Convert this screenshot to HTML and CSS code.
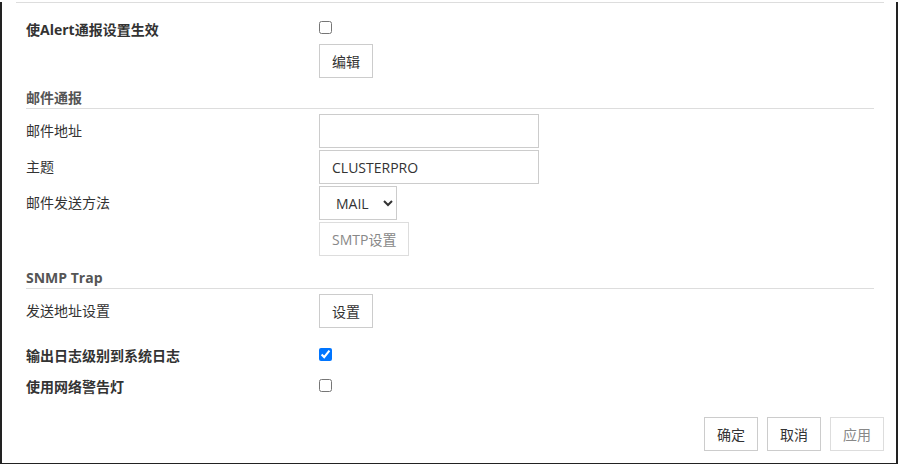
FILE: index.html
```html
<!doctype html>
<html lang="zh">
<head>
  <meta charset="UTF-8">
  <title>Alert通报设置</title>
  <link rel="stylesheet" href="styles.css">
</head>
<body>

  <div class="dialog">
    <div class="panel">
      <div class="form">

        <div class="row row-top">
          <label class="label strong">使Alert通报设置生效</label>
          <div class="ctrl stack">
            <input type="checkbox" class="check">
            <button class="btn btn-edit">编辑</button>
          </div>
        </div>

        <h3 class="heading">邮件通报</h3>
        <div class="fields">
          <div class="row">
            <label class="label">邮件地址</label>
            <div class="ctrl"><input type="text" class="text"></div>
          </div>
          <div class="row">
            <label class="label">主题</label>
            <div class="ctrl"><input type="text" class="text" value="CLUSTERPRO"></div>
          </div>
          <div class="row">
            <label class="label">邮件发送方法</label>
            <div class="ctrl">
              <select class="select">
                <option>MAIL</option>
                <option>SMTP</option>
              </select>
            </div>
          </div>
          <div class="row">
            <span class="label"></span>
            <div class="ctrl"><button class="btn" disabled>SMTP设置</button></div>
          </div>
        </div>

        <h3 class="heading heading-snmp">SNMP Trap</h3>
        <div class="fields">
          <div class="row">
            <label class="label">发送地址设置</label>
            <div class="ctrl"><button class="btn">设置</button></div>
          </div>
        </div>

        <div class="row row-log">
          <label class="label strong">输出日志级别到系统日志</label>
          <div class="ctrl stack"><input type="checkbox" class="check" checked></div>
        </div>
        <div class="row row-light">
          <label class="label strong">使用网络警告灯</label>
          <div class="ctrl stack"><input type="checkbox" class="check"></div>
        </div>

      </div>

      <div class="footer">
        <button class="btn">确定</button>
        <button class="btn">取消</button>
        <button class="btn" disabled>应用</button>
      </div>
    </div>
  </div>

</body>
</html>
```

FILE: styles.css
```css
body {
  margin: 0;
  background-color: #fff;
  font-family: "Open Sans", "Noto Sans CJK SC", sans-serif;
  font-size: 14px;
  color: #333;
}

.dialog {
  box-sizing: border-box;
  width: 898px;
  height: 463px;
  padding: 0 12px 0 14px;
  border-left: 2px solid #222;
  border-right: 2px solid #222;
  border-bottom: 2px solid #222;
}

.panel {
  margin-top: 2px;
  border-top: 1px solid #ddd;
}

.form {
  padding: 0 10px;
}

/* Rows: label column + control column */
.row {
  display: grid;
  grid-template-columns: 293px 1fr;
  align-items: center;
}

.row-top,
.row-log,
.row-light {
  align-items: start;
}

.row-top {
  margin-top: 17px;
}

.row-log {
  margin-top: 18px;
}

.row-light {
  margin-top: 11px;
}

.label {
  line-height: 20px;
}

.label.strong {
  font-weight: bold;
}

.stack {
  display: flex;
  flex-direction: column;
  align-items: flex-start;
}

.check {
  width: 13px;
  height: 13px;
  margin: 1px 0 0 0;
}

.row-log .check,
.row-light .check {
  margin-top: 2px;
}

.btn-edit {
  margin-top: 10px;
}

/* Section headings */
.heading {
  margin: 10px 0 0;
  font-size: 14px;
  line-height: 20px;
  font-weight: bold;
  color: #555;
  border-bottom: 1px solid #ddd;
}

.heading-snmp {
  margin-top: 12px;
}

.fields {
  display: flex;
  flex-direction: column;
  gap: 2px;
  margin-top: 5px;
}

/* Controls */
.text {
  box-sizing: border-box;
  width: 220px;
  height: 34px;
  padding: 0 12px;
  border: 1px solid #ccc;
  border-radius: 0;
  font: inherit;
  color: #333;
  outline: none;
}

.select {
  box-sizing: border-box;
  width: 78px;
  height: 34px;
  padding: 0 4px 0 12px;
  border: 1px solid #ccc;
  border-radius: 0;
  background-color: #fff;
  font: inherit;
  color: #333;
}

.btn {
  box-sizing: border-box;
  height: 34px;
  padding: 0 12px;
  border: 1px solid #ccc;
  border-radius: 0;
  background-color: #fff;
  font: inherit;
  color: #333;
  cursor: pointer;
}

.btn:disabled {
  color: #888;
  border-color: #ddd;
  cursor: default;
}

.footer {
  display: flex;
  justify-content: flex-end;
  gap: 9px;
  margin-top: 20px;
}
```
